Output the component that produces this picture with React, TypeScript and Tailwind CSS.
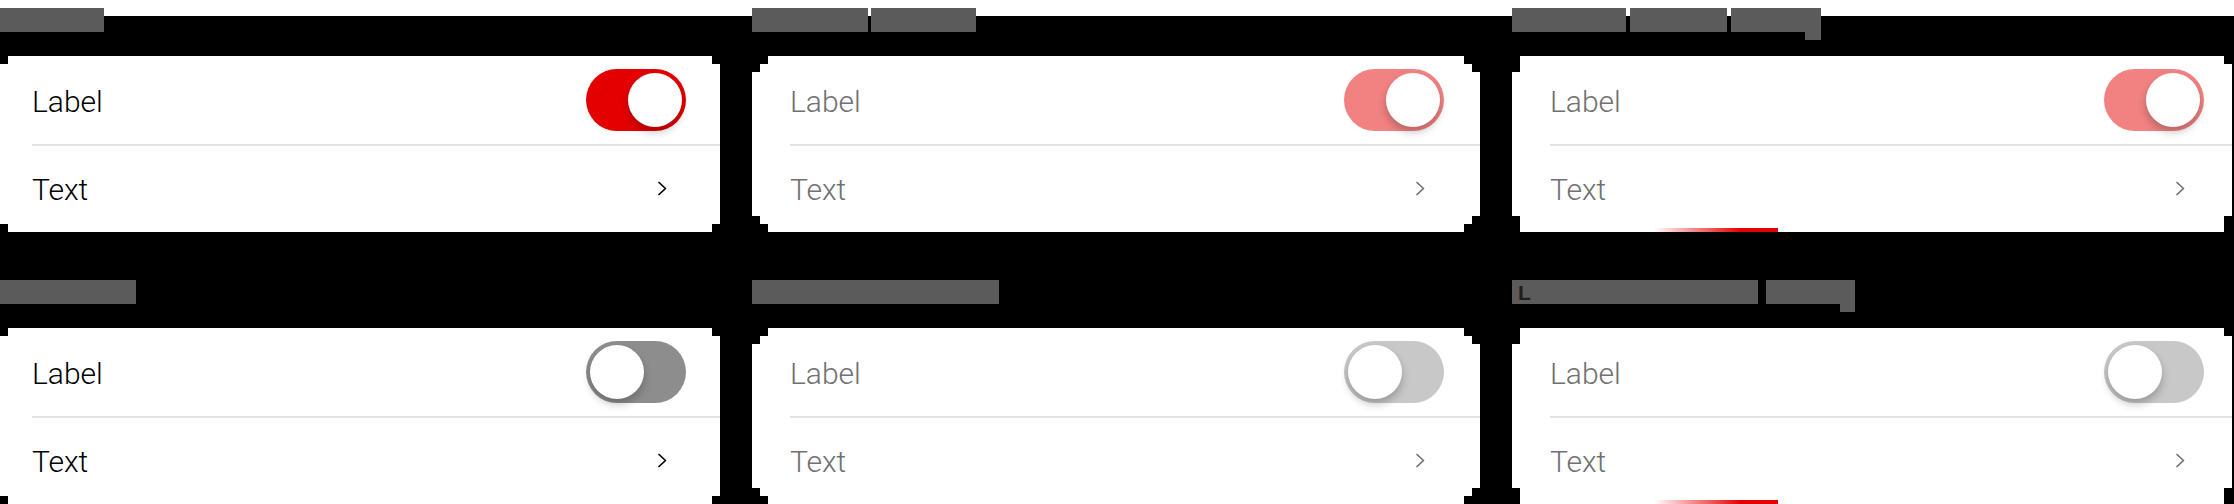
import React from "react";

type Box = { w: string; ml?: string; desc?: string; l?: boolean };

function TitleBar({ boxes }: { boxes: Box[] }) {
  return (
    <div className="h-6 flex items-start">
      {boxes.map((b, i) => (
        <div key={i} className={`flex flex-col items-end ${b.ml ?? ""}`}>
          <div className={`h-6 bg-[#5b5b5b] ${b.w} flex items-center`}>
            {b.l ? (
              <span className="ml-[6px] text-[21px] leading-none text-[#1e1e1e] font-['Liberation_Sans',sans-serif] font-bold">L</span>
            ) : null}
          </div>
          {b.desc ? <div className={`h-2 bg-[#5b5b5b] ${b.desc}`} /> : null}
        </div>
      ))}
    </div>
  );
}

function Toggle({ on, light }: { on: boolean; light: boolean }) {
  const track = on
    ? light
      ? "bg-[#f28282]"
      : "bg-[#e50000]"
    : light
    ? "bg-[#c8c8c8]"
    : "bg-[#8d8d8d]";
  return (
    <div className={`w-[100px] h-[62px] rounded-full p-1 flex ${on ? "justify-end" : "justify-start"} ${track}`}>
      <div className="w-[54px] h-[54px] rounded-full bg-white shadow-[0_5px_8px_rgba(0,0,0,0.24)]" />
    </div>
  );
}

function Chevron({ light }: { light: boolean }) {
  return (
    <svg width="11" height="15" viewBox="0 0 11 15" className={light ? "text-[#6f6f6f]" : "text-black"}>
      <polyline points="2,1.5 8.5,7.5 2,13.5" fill="none" stroke="currentColor" strokeWidth="1.7" strokeLinecap="round" strokeLinejoin="round" />
    </svg>
  );
}

function Card({ clip, pl, on, light, bar }: { clip: string; pl: string; on: boolean; light: boolean; bar: boolean }) {
  const txt = light ? "text-[#707070]" : "text-black";
  return (
    <div className={`h-[176px] bg-white flex flex-col ${clip} ${pl}`}>
      <div className="h-[90px] flex items-center border-b-2 border-[#e3e3e3]">
        <div className="w-[654px] flex items-center justify-between">
          <span className={`text-[30px] leading-none font-light pt-[3px] ${txt}`}>Label</span>
          <Toggle on={on} light={light} />
        </div>
      </div>
      <div className="h-[82px] pt-[2px] flex items-center">
        <div className="w-[636px] flex items-center justify-between">
          <span className={`text-[30px] leading-none font-light pt-[3px] ${txt}`}>Text</span>
          <Chevron light={light} />
        </div>
      </div>
      <div className="h-1 flex">
        {bar ? <div className="ml-[104px] w-[124px] h-1 bg-[linear-gradient(to_right,#ffffff,#e60000_70%)]" /> : null}
      </div>
    </div>
  );
}

const CLIP1 =
  "[clip-path:polygon(8px_0,712px_0,712px_8px,720px_8px,720px_168px,712px_168px,712px_176px,8px_176px,8px_168px,0_168px,0_8px,8px_8px)]";
const CLIP2 =
  "[clip-path:polygon(16px_0,712px_0,712px_8px,720px_8px,720px_16px,728px_16px,728px_160px,720px_160px,720px_168px,712px_168px,712px_176px,16px_176px,16px_168px,8px_168px,8px_160px,0_160px,0_16px,8px_16px,8px_8px,16px_8px)]";
const CLIP3 =
  "[clip-path:polygon(8px_0,712px_0,712px_8px,720px_8px,720px_160px,712px_160px,712px_176px,8px_176px,8px_160px,0_160px,0_16px,8px_16px)]";

export default function App() {
  return (
    <div className="w-[2234px] h-[504px] bg-black overflow-hidden font-['Roboto',sans-serif]">
      <div className="h-4 bg-white" />
      <div className="-mt-2 grid grid-cols-[720px_728px_720px] gap-x-8 gap-y-12">
        {/* Row 1 */}
        <div className="flex flex-col gap-6">
          <TitleBar boxes={[{ w: "w-[104px]" }]} />
          <Card clip={CLIP1} pl="pl-8" on light={false} bar={false} />
        </div>
        <div className="flex flex-col gap-6">
          <TitleBar boxes={[{ w: "w-[116px]" }, { w: "w-[105px]", ml: "ml-[3px]" }]} />
          <Card clip={CLIP2} pl="pl-[38px]" on light bar={false} />
        </div>
        <div className="flex flex-col gap-6">
          <TitleBar
            boxes={[
              { w: "w-[114px]" },
              { w: "w-[97px]", ml: "ml-1" },
              { w: "w-[90px]", ml: "ml-1", desc: "w-4" },
            ]}
          />
          <Card clip={CLIP3} pl="pl-[38px]" on light bar />
        </div>

        {/* Row 2 */}
        <div className="flex flex-col gap-6">
          <TitleBar boxes={[{ w: "w-[136px]" }]} />
          <Card clip={CLIP1} pl="pl-8" on={false} light={false} bar={false} />
        </div>
        <div className="flex flex-col gap-6">
          <TitleBar boxes={[{ w: "w-[247px]" }]} />
          <Card clip={CLIP2} pl="pl-[38px]" on={false} light bar={false} />
        </div>
        <div className="flex flex-col gap-6">
          <TitleBar
            boxes={[
              { w: "w-[246px]", l: true },
              { w: "w-[89px]", ml: "ml-[8px]", desc: "w-[15px]" },
            ]}
          />
          <Card clip={CLIP3} pl="pl-[38px]" on={false} light bar />
        </div>
      </div>
    </div>
  );
}
